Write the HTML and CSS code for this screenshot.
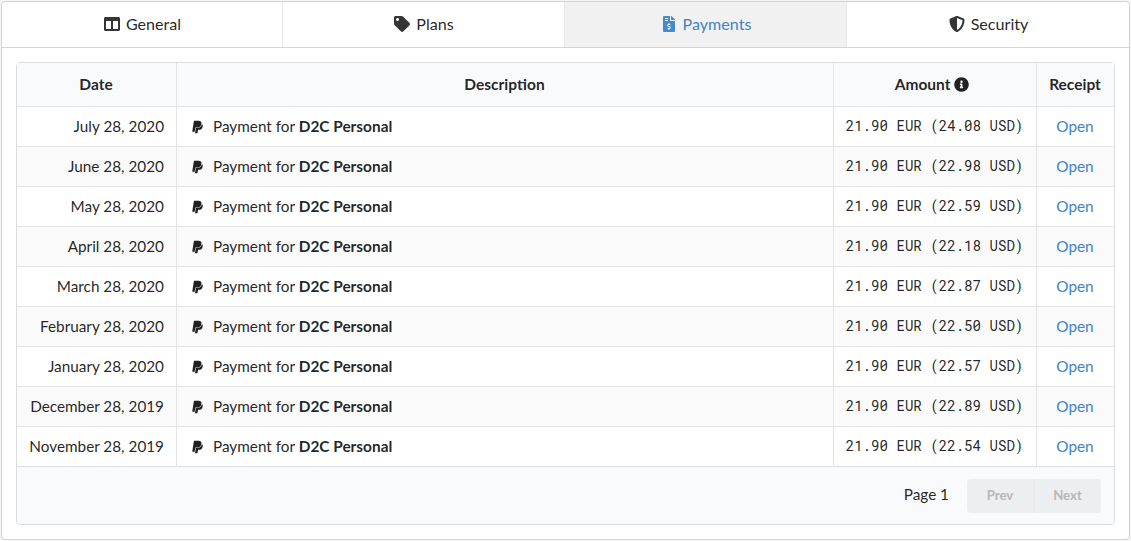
FILE: index.html
```html
<!DOCTYPE html>
<html lang="en">
<head>
<meta charset="utf-8">
<title>Payments</title>
<link rel="stylesheet" href="styles.css">
</head>
<body>
<svg class="sprite" aria-hidden="true">
  <symbol id="columns" viewBox="0 0 512 512"><path d="M464 32H48C21.49 32 0 53.49 0 80v352c0 26.51 21.49 48 48 48h416c26.51 0 48-21.49 48-48V80c0-26.51-21.49-48-48-48zM224 416H64V160h160v256zm224 0H288V160h160v256z"/></symbol>
  <symbol id="tag" viewBox="0 0 512 512"><path d="M0 252.118V48C0 21.49 21.49 0 48 0h204.118a48 48 0 0 1 33.941 14.059l211.882 211.882c18.745 18.745 18.745 49.137 0 67.882L293.823 497.941c-18.745 18.745-49.137 18.745-67.882 0L14.059 286.059A48 48 0 0 1 0 252.118zM112 64c-26.51 0-48 21.49-48 48s21.49 48 48 48 48-21.49 48-48-21.49-48-48-48z"/></symbol>
  <symbol id="invoice" viewBox="0 0 384 512"><path d="M377 105L279.1 7c-4.5-4.5-10.6-7-17-7H256v128h128v-6.1c0-6.3-2.5-12.4-7-16.9zm-153 31V0H24C10.7 0 0 10.7 0 24v464c0 13.3 10.7 24 24 24h336c13.3 0 24-10.7 24-24V160H248c-13.2 0-24-10.8-24-24zM64 72c0-4.42 3.58-8 8-8h80c4.42 0 8 3.58 8 8v16c0 4.42-3.58 8-8 8H72c-4.42 0-8-3.58-8-8V72zm0 80v-16c0-4.42 3.58-8 8-8h80c4.42 0 8 3.58 8 8v16c0 4.42-3.58 8-8 8H72c-4.42 0-8-3.58-8-8zm144 263.88V440c0 4.42-3.58 8-8 8h-16c-4.42 0-8-3.58-8-8v-24.29c-11.29-.58-22.27-4.52-31.37-11.35-3.9-2.93-4.1-8.77-.57-12.14l11.75-11.21c2.77-2.64 6.89-2.76 10.13-.73 3.87 2.42 8.26 3.72 12.82 3.72h28.11c6.5 0 11.8-5.92 11.8-13.19 0-5.95-3.61-11.19-8.77-12.73l-45-13.5c-18.59-5.58-31.58-23.42-31.58-43.39 0-24.52 19.05-44.44 42.67-45.07V232c0-4.42 3.58-8 8-8h16c4.42 0 8 3.58 8 8v24.29c11.29.58 22.27 4.51 31.37 11.35 3.9 2.93 4.1 8.77.57 12.14l-11.75 11.21c-2.77 2.64-6.89 2.76-10.13.73-3.87-2.43-8.26-3.72-12.82-3.72h-28.11c-6.5 0-11.8 5.92-11.8 13.19 0 5.95 3.61 11.19 8.77 12.73l45 13.5c18.59 5.58 31.58 23.42 31.58 43.39 0 24.53-19.05 44.44-42.67 45.07z"/></symbol>
  <symbol id="shield" viewBox="0 0 512 512"><path d="M466.5 83.7l-192-80a48.15 48.15 0 0 0-36.9 0l-192 80C27.7 91.1 16 108.6 16 128c0 198.5 114.5 335.7 221.5 380.3 11.8 4.9 25.1 4.9 36.9 0C360.1 472.6 496 349.3 496 128c0-19.4-11.7-36.9-29.5-44.3zM256.1 446.3l-.1-381 175.9 73.3c-3.3 151.4-82.1 261.1-175.8 307.7z"/></symbol>
  <symbol id="info" viewBox="0 0 512 512"><path d="M256 8C119.043 8 8 119.083 8 256c0 136.997 111.043 248 248 248s248-111.003 248-248C504 119.083 392.957 8 256 8zm0 110c23.196 0 42 18.804 42 42s-18.804 42-42 42-42-18.804-42-42 18.804-42 42-42zm56 254c0 6.627-5.373 12-12 12h-88c-6.627 0-12-5.373-12-12v-24c0-6.627 5.373-12 12-12h12v-64h-12c-6.627 0-12-5.373-12-12v-24c0-6.627 5.373-12 12-12h64c6.627 0 12 5.373 12 12v100h12c6.627 0 12 5.373 12 12v24z"/></symbol>
  <symbol id="paypal" viewBox="0 0 384 512"><path d="M111.4 295.9c-3.5 19.2-17.4 108.7-21.5 134-.3 1.8-1 2.5-3 2.5H12.3c-7.6 0-13.1-6.6-12.1-13.9L58.8 46.6c1.5-9.6 10.1-16.9 20-16.9 152.3 0 165.1-3.7 204 11.4 60.1 23.3 65.6 79.5 44 140.3-21.5 62.6-72.5 89.5-140.1 90.3-43.4.7-69.5-7-75.3 24.2zM357.1 152c-1.8-1.3-2.5-1.8-3 1.3-2 11.4-5.1 22.5-8.8 33.6-39.9 113.8-150.5 103.9-204.5 103.9-6.1 0-10.1 3.3-10.9 9.4-22.6 140.4-27.1 169.7-27.1 169.7-1 7.1 3.5 12.9 10.6 12.9h63.5c8.6 0 15.7-6.3 17.4-14.9.7-5.4-1.1 6.1 14.4-91.3 4.6-22 14.3-19.7 29.3-19.7 71 0 126.4-28.8 142.9-112.3 6.5-34.8 4.6-71.4-23.8-92.6z"/></symbol>
</svg>
<main class="panel">
  <nav class="tabs">
    <a class="tab"><svg class="tab-icon"><use href="#columns"/></svg>General</a>
    <a class="tab"><svg class="tab-icon"><use href="#tag"/></svg>Plans</a>
    <a class="tab active"><svg class="tab-icon"><use href="#invoice"/></svg>Payments</a>
    <a class="tab"><svg class="tab-icon"><use href="#shield"/></svg>Security</a>
  </nav>
  <section class="content">
    <table class="payments">
      <colgroup><col class="c-date"><col><col class="c-amount"><col class="c-receipt"></colgroup>
      <thead><tr><th>Date</th><th>Description</th><th class="amount-head">Amount <svg class="info-icon"><use href="#info"/></svg></th><th>Receipt</th></tr></thead>
      <tbody>
        <tr><td class="date">July 28, 2020</td><td class="desc"><svg class="pay-icon"><use href="#paypal"/></svg>Payment for <b>D2C Personal</b></td><td class="amount">21.90 EUR (24.08 USD)</td><td class="receipt"><a>Open</a></td></tr>
        <tr><td class="date">June 28, 2020</td><td class="desc"><svg class="pay-icon"><use href="#paypal"/></svg>Payment for <b>D2C Personal</b></td><td class="amount">21.90 EUR (22.98 USD)</td><td class="receipt"><a>Open</a></td></tr>
        <tr><td class="date">May 28, 2020</td><td class="desc"><svg class="pay-icon"><use href="#paypal"/></svg>Payment for <b>D2C Personal</b></td><td class="amount">21.90 EUR (22.59 USD)</td><td class="receipt"><a>Open</a></td></tr>
        <tr><td class="date">April 28, 2020</td><td class="desc"><svg class="pay-icon"><use href="#paypal"/></svg>Payment for <b>D2C Personal</b></td><td class="amount">21.90 EUR (22.18 USD)</td><td class="receipt"><a>Open</a></td></tr>
        <tr><td class="date">March 28, 2020</td><td class="desc"><svg class="pay-icon"><use href="#paypal"/></svg>Payment for <b>D2C Personal</b></td><td class="amount">21.90 EUR (22.87 USD)</td><td class="receipt"><a>Open</a></td></tr>
        <tr><td class="date">February 28, 2020</td><td class="desc"><svg class="pay-icon"><use href="#paypal"/></svg>Payment for <b>D2C Personal</b></td><td class="amount">21.90 EUR (22.50 USD)</td><td class="receipt"><a>Open</a></td></tr>
        <tr><td class="date">January 28, 2020</td><td class="desc"><svg class="pay-icon"><use href="#paypal"/></svg>Payment for <b>D2C Personal</b></td><td class="amount">21.90 EUR (22.57 USD)</td><td class="receipt"><a>Open</a></td></tr>
        <tr><td class="date">December 28, 2019</td><td class="desc"><svg class="pay-icon"><use href="#paypal"/></svg>Payment for <b>D2C Personal</b></td><td class="amount">21.90 EUR (22.89 USD)</td><td class="receipt"><a>Open</a></td></tr>
        <tr><td class="date">November 28, 2019</td><td class="desc"><svg class="pay-icon"><use href="#paypal"/></svg>Payment for <b>D2C Personal</b></td><td class="amount">21.90 EUR (22.54 USD)</td><td class="receipt"><a>Open</a></td></tr>
      </tbody>
      <tfoot><tr><td colspan="4"><div class="pager"><span class="page">Page 1</span><div class="buttons"><button disabled>Prev</button><button disabled>Next</button></div></div></td></tr></tfoot>
    </table>
  </section>
</main>
</body>
</html>
```

FILE: styles.css
```css
* { box-sizing: border-box; }
body {
  margin: 0;
  padding: 1px;
  background: #f4f4f4;
  color: rgba(0, 0, 0, .87);
  font: 15.3px/20px Lato, "Liberation Sans", sans-serif;
}
.sprite { display: none; }
svg { fill: currentColor; }
.panel {
  width: 1129px;
  height: 539px;
  background: #fff;
  border: 1px solid #d4d4d5;
  border-radius: 4px;
  overflow: hidden;
}
.tabs {
  display: grid;
  grid-template-columns: 281px 282px 282px 1fr;
  height: 46px;
  border-bottom: 1px solid #d4d4d5;
}
.tab {
  display: flex;
  align-items: center;
  justify-content: center;
  padding-bottom: 1px;
  border-right: 1px solid #e8e8e9;
  font-size: 16.1px;
}
.tab:last-child { border-right: 0; }
.tab.active { background: #f1f1f1; color: #4183c4; }
.tab-icon { width: 18px; height: 16px; margin-right: 5px; opacity: .9; }
.tab.active .tab-icon { color: #2f80d0; }
.content { padding: 14px; }
.payments {
  width: 1099px;
  table-layout: fixed;
  border: 1px solid #dcddde;
  border-radius: 4px;
  border-spacing: 0;
}
.c-date { width: 159px; }
.c-amount { width: 203px; }
.c-receipt { width: 78px; }
th, td { padding: 0 0 2px; border-left: 1px solid #e3e4e5; }
th:first-child, td:first-child { border-left: 0; }
th {
  height: 44px;
  padding-right: 1px;
  background: #f9fafb;
  border-bottom: 1px solid #e3e4e5;
  font-size: 15.5px;
  font-weight: 700;
}
.amount-head { padding-right: 6px; }
.info-icon { width: 15px; height: 15px; vertical-align: -2px; }
tbody td { height: 40px; border-bottom: 1px solid #e3e4e5; }
tbody tr:nth-child(even) { background: #fafafa; }
tbody tr:last-child td { border-bottom-color: #dcddde; }
.date { padding-right: 12px; text-align: right; }
.desc { padding-left: 15px; }
.pay-icon { width: 11px; height: 14px; margin-right: 10px; vertical-align: -2px; }
.desc b { font-size: 15.4px; }
.amount { padding-right: 1px; text-align: center; font-family: "Roboto Mono", "DejaVu Sans Mono", monospace; font-size: 14.1px; }
.receipt { padding-right: 1px; text-align: center; }
.receipt a { color: #4183c4; }
tfoot td { height: 57px; padding: 0; background: #f9fafb; border-radius: 0 0 4px 4px; }
.pager { display: flex; justify-content: flex-end; align-items: center; gap: 18px; padding-right: 13px; }
.page { padding-bottom: 3px; }
.buttons { display: flex; border-radius: 4px; overflow: hidden; }
.buttons button {
  width: 67px;
  height: 34px;
  padding: 0 1px 1px 0;
  border: 0;
  border-left: 1px solid #e8e9ea;
  background: #edeeef;
  color: #b7b8b9;
  font: 700 13.2px Lato, sans-serif;
}
.buttons button:first-child { border-left: 0; }
```
